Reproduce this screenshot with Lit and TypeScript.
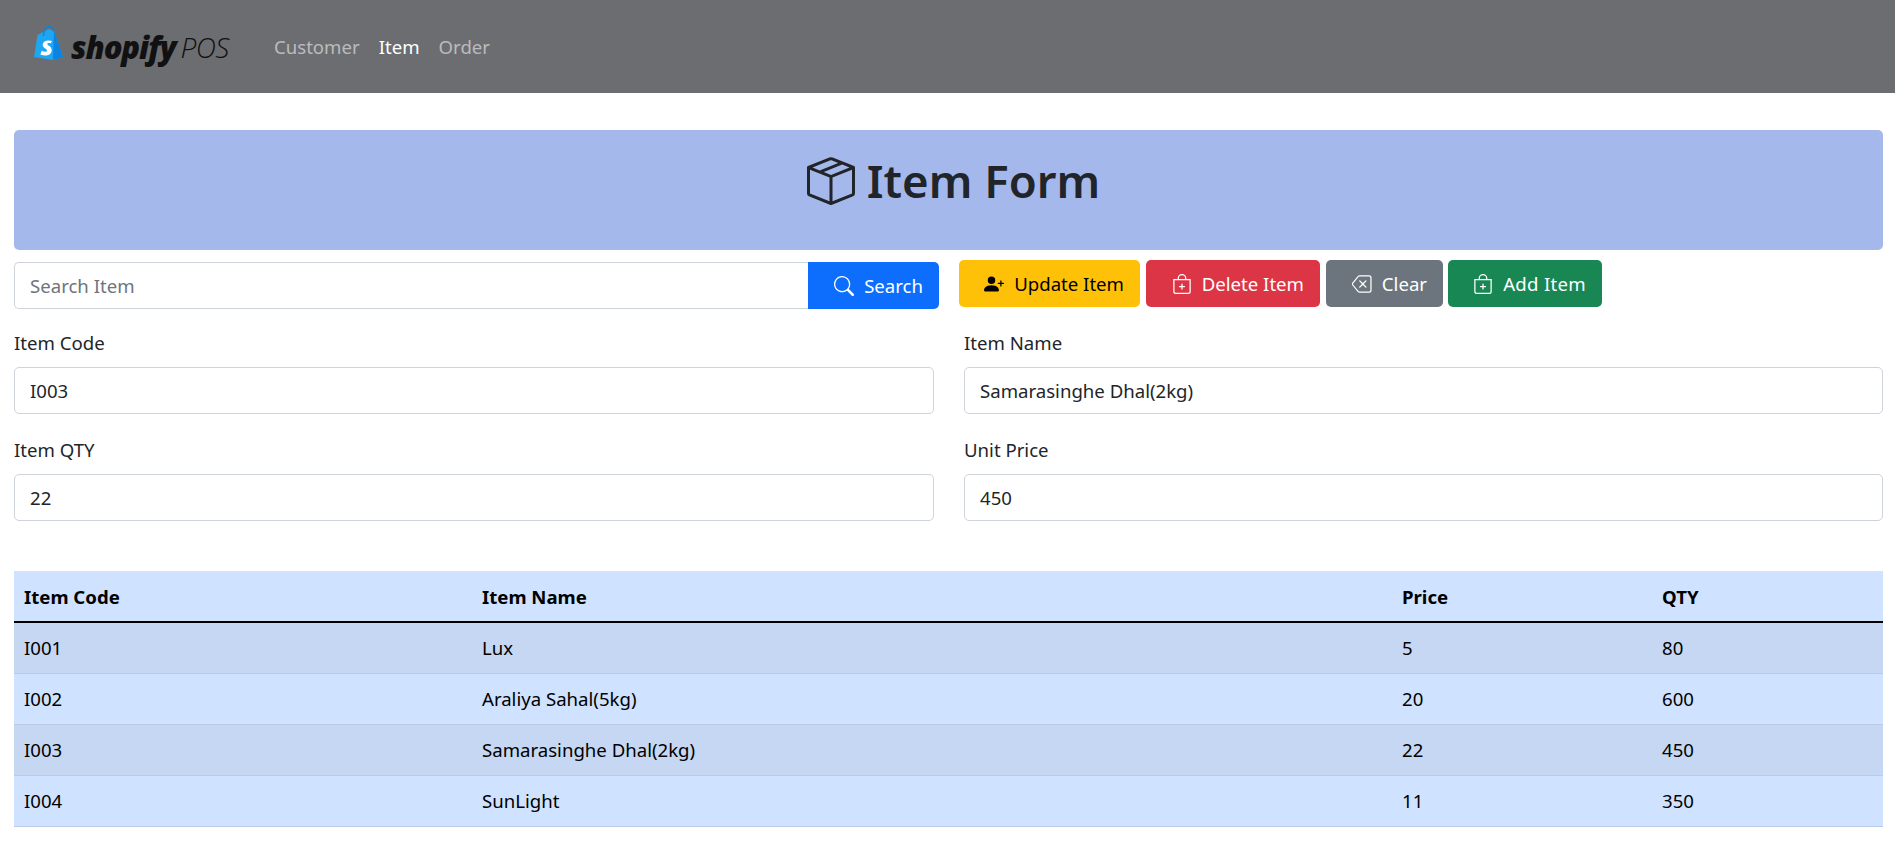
import { LitElement, html, css, svg } from "lit";
import { customElement } from "lit/decorators.js";

const icons = {
  box: svg`<path d="M8.186 1.113a.5.5 0 0 0-.372 0L1.846 3.5l2.404.961L10.404 2l-2.218-.887zm3.564 1.426L5.596 5 8 5.961 14.154 3.5l-2.404-.961zm3.25 1.7-6.5 2.6v7.922l6.5-2.6V4.24zM7.5 14.762V6.838L1 4.239v7.925l6.5 2.6zM7.443.184a1.5 1.5 0 0 1 1.114 0l7.129 2.852A.5.5 0 0 1 16 3.5v8.662a1 1 0 0 1-.629.928l-7.185 2.874a.5.5 0 0 1-.372 0L.63 13.09a1 1 0 0 1-.63-.928V3.5a.5.5 0 0 1 .314-.464L7.443.184z"/>`,
  search: svg`<path d="M11.742 10.344a6.5 6.5 0 1 0-1.397 1.398h-.001c.03.04.062.078.098.115l3.85 3.85a1 1 0 0 0 1.415-1.414l-3.85-3.85a1.007 1.007 0 0 0-.115-.1zM12 6.5a5.5 5.5 0 1 1-11 0 5.5 5.5 0 0 1 11 0z"/>`,
  person: svg`<path d="M1 14s-1 0-1-1 1-4 6-4 6 3 6 4-1 1-1 1H1zm5-6a3 3 0 1 0 0-6 3 3 0 0 0 0 6z"/><path fill-rule="evenodd" d="M13.5 5a.5.5 0 0 1 .5.5V7h1.5a.5.5 0 0 1 0 1H14v1.5a.5.5 0 0 1-1 0V8h-1.5a.5.5 0 0 1 0-1H13V5.5a.5.5 0 0 1 .5-.5z"/>`,
  bag: svg`<path fill-rule="evenodd" d="M8 7.5a.5.5 0 0 1 .5.5v1.5H10a.5.5 0 0 1 0 1H8.5V12a.5.5 0 0 1-1 0v-1.5H6a.5.5 0 0 1 0-1h1.5V8a.5.5 0 0 1 .5-.5z"/><path d="M8 1a2.5 2.5 0 0 1 2.5 2.5V4h-5v-.5A2.5 2.5 0 0 1 8 1zm3.5 3v-.5a3.5 3.5 0 1 0-7 0V4H1v10a2 2 0 0 0 2 2h10a2 2 0 0 0 2-2V4h-3.5zM2 5h12v9a1 1 0 0 1-1 1H3a1 1 0 0 1-1-1V5z"/>`,
  backspace: svg`<path d="M5.83 5.146a.5.5 0 0 0 0 .708L7.975 8l-2.147 2.146a.5.5 0 0 0 .707.708l2.147-2.147 2.146 2.147a.5.5 0 0 0 .707-.708L9.39 8l2.146-2.146a.5.5 0 0 0-.707-.708L8.683 7.293 6.536 5.146a.5.5 0 0 0-.707 0z"/><path d="M13.683 1a2 2 0 0 1 2 2v10a2 2 0 0 1-2 2H6.070a2 2 0 0 1-1.404-.576l-4.430-5.500a1.500 1.500 0 0 1 0-1.848l4.430-5.500A2 2 0 0 1 6.070 1h7.613zM6.070 2a1 1 0 0 0-.702.288L.990 7.500a.8.8 0 0 0 0 1l4.378 5.212a1 1 0 0 0 .702.288h7.613a1 1 0 0 0 1-1V3a1 1 0 0 0-1-1H6.070z"/>`,
};

const icon = (name: keyof typeof icons, size: number) => html`
  <svg class="bi" width=${size} height=${size} viewBox="0 0 16 16" fill="currentColor">${icons[name]}</svg>
`;

const rows = [
  ["I001", "Lux", "5", "80"],
  ["I002", "Araliya Sahal(5kg)", "20", "600"],
  ["I003", "Samarasinghe Dhal(2kg)", "22", "450"],
  ["I004", "SunLight", "11", "350"],
];

@customElement("app-root")
export class AppRoot extends LitElement {
  static styles = css`
    :host {
      display: block;
      font-family: "Noto Sans", "Open Sans", sans-serif;
      font-size: 18.6px;
      color: #212529;
      background: #fff;
    }
    .navbar {
      height: 93px;
      background: #6c6d71;
      display: flex;
      align-items: center;
      padding-left: 28px;
    }
    .brand {
      display: flex;
      align-items: center;
      width: 246px;
      color: #111;
      white-space: nowrap;
    }
    .brand svg {
      margin: 0 3px 5px 0;
      flex: none;
    }
    .brand b {
      font-family: "Open Sans", sans-serif;
      font-weight: 800;
      font-style: italic;
      font-size: 31px;
      letter-spacing: -1.1px;
    }
    .brand i {
      font-family: "Open Sans", sans-serif;
      font-weight: 300;
      font-size: 28px;
      margin-left: 5px;
      letter-spacing: -0.5px;
    }
    .nav {
      display: flex;
      gap: 19px;
    }
    .nav a {
      color: rgba(255, 255, 255, 0.55);
      text-decoration: none;
    }
    .nav a.active {
      color: #fff;
    }
    main {
      padding: 37px 12px 0 14px;
    }
    .banner {
      height: 120px;
      background: #a5b8eb;
      border-radius: 5px;
      display: flex;
      align-items: center;
      justify-content: center;
      gap: 12px;
      padding: 0 0 19px 10px;
      box-sizing: border-box;
      font-size: 45.5px;
      font-weight: 600;
      margin: 0 0 10px;
    }
    .banner span {
      line-height: 1;
    }
    .toolbar {
      display: flex;
      align-items: flex-start;
      gap: 20px;
      height: 49px;
    }
    .search {
      display: flex;
      width: 925px;
      margin-top: 2px;
    }
    .search input {
      flex: 1;
      border-radius: 5px 0 0 5px;
      border-right: 0;
    }
    .search .btn {
      border-radius: 0 5px 5px 0;
      background: #0d6efd;
      color: #fff;
      width: 131px;
    }
    .actions {
      display: flex;
      gap: 6px;
    }
    .btn {
      height: 47px;
      box-sizing: border-box;
      border: 0;
      border-radius: 5px;
      font: inherit;
      display: flex;
      align-items: center;
      justify-content: flex-end;
      gap: 10px;
      padding: 0 16px 0 0;
    }
    .warning { background: #ffc107; color: #000; width: 181px; }
    .danger { background: #dc3545; color: #fff; width: 174px; }
    .secondary { background: #6c757d; color: #fff; width: 117px; }
    .success { background: #198754; color: #fff; width: 154px; margin-left: -1px; letter-spacing: 0.3px; }
    .fields {
      display: grid;
      grid-template-columns: 920px 1fr;
      column-gap: 30px;
      row-gap: 21px;
      margin-top: 19px;
    }
    label {
      display: block;
      line-height: 30px;
      margin-bottom: 9px;
    }
    input {
      display: block;
      width: 100%;
      height: 47px;
      box-sizing: border-box;
      border: 1px solid #ced4da;
      border-radius: 5px;
      padding: 0 15px;
      font: inherit;
      color: #212529;
      background: #fff;
      outline: none;
    }
    input::placeholder {
      color: #6c757d;
    }
    table {
      width: 100%;
      margin-top: 50px;
      border-collapse: collapse;
      table-layout: fixed;
      color: #000;
      background: #cfe2ff;
    }
    th, td {
      height: 51px;
      padding: 0 10px;
      text-align: left;
      box-sizing: border-box;
      border-bottom: 1px solid #bacbe6;
    }
    th {
      font-weight: 700;
      border-bottom: 2px solid #000;
    }
    tbody tr:nth-child(odd) {
      background: #c5d7f2;
    }
  `;

  field(name: string, value: string) {
    return html`<div><label>${name}</label><input .value=${value} /></div>`;
  }

  render() {
    return html`
      <nav class="navbar">
        <div class="brand">
          <svg width="40" height="40" viewBox="0 0 40 40">
            <path d="M6 33 9.500 11 21 5l5 2 9 26-10 3z" fill="#1fa6f2" />
            <path d="M26 7l9 26-10 3z" fill="#0b83e0" />
            <path d="M15.500 12c0-6 2.500-9.500 5-9.500s4.500 2.500 5 5" fill="none" stroke="#0b83e0" stroke-width="1.300" />
            <path d="M24 17c-4.500-1.500-9-.2-9.300 3.600-.3 3.600 4.500 4.200 4.300 6.100-.2 1.600-3.200 1.400-5.300.1l-1.300 3.800c4.800 2.100 10.600 1 11.300-3.900.6-4.300-4.500-5.200-4.400-6.700.1-1.100 2-1.200 3.400-.6z" fill="#fff" />
          </svg>
          <b>shopify</b><i>POS</i>
        </div>
        <div class="nav">
          <a href="#">Customer</a>
          <a href="#" class="active">Item</a>
          <a href="#">Order</a>
        </div>
      </nav>
      <main>
        <h1 class="banner">${icon("box", 48)}<span>Item Form</span></h1>
        <div class="toolbar">
          <div class="search">
            <input placeholder="Search Item" />
            <button class="btn">${icon("search", 20)}Search</button>
          </div>
          <div class="actions">
            <button class="btn warning">${icon("person", 20)}Update Item</button>
            <button class="btn danger">${icon("bag", 20)}Delete Item</button>
            <button class="btn secondary">${icon("backspace", 20)}Clear</button>
            <button class="btn success">${icon("bag", 20)}Add Item</button>
          </div>
        </div>
        <div class="fields">
          ${this.field("Item Code", "I003")}
          ${this.field("Item Name", "Samarasinghe Dhal(2kg)")}
          ${this.field("Item QTY", "22")}
          ${this.field("Unit Price", "450")}
        </div>
        <table>
          <colgroup>
            <col style="width: 458px" />
            <col style="width: 920px" />
            <col style="width: 260px" />
            <col />
          </colgroup>
          <thead>
            <tr><th>Item Code</th><th>Item Name</th><th>Price</th><th>QTY</th></tr>
          </thead>
          <tbody>
            ${rows.map(
              (r) => html`<tr>${r.map((c) => html`<td>${c}</td>`)}</tr>`
            )}
          </tbody>
        </table>
      </main>
    `;
  }
}
